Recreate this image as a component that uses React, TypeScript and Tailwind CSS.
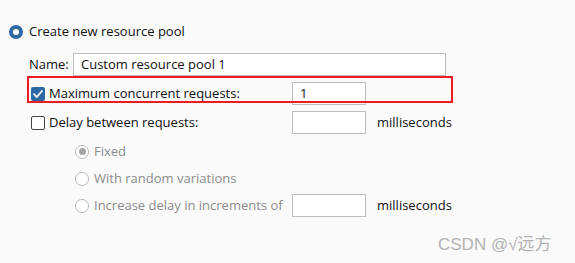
import type { ReactNode } from "react";

const font = { fontFamily: '"Open Sans", "Noto Sans", sans-serif' };

function Checkbox({ checked }: { checked?: boolean }) {
  if (checked) {
    return (
      <span className="flex size-[14px] shrink-0 items-center justify-center rounded-[2px] bg-[#2d6aa5]">
        <svg viewBox="0 0 14 14" className="size-[14px]" aria-hidden>
          <path d="M3 7.2 L5.8 10 L11 4" fill="none" stroke="white" strokeWidth="1.8" strokeLinecap="round" strokeLinejoin="round" />
        </svg>
      </span>
    );
  }
  return <span className="size-[14px] shrink-0 rounded-[2px] border border-[#444444] bg-white" />;
}

function Radio({ selected, disabled }: { selected?: boolean; disabled?: boolean }) {
  if (disabled) {
    return (
      <span className="flex size-[14px] shrink-0 items-center justify-center rounded-full border border-[#b8b8b8] bg-white">
        {selected ? <span className="size-[7px] rounded-full bg-[#a3a3a3]" /> : null}
      </span>
    );
  }
  return (
    <span className="flex size-[14px] shrink-0 items-center justify-center rounded-full bg-[#2d6aa5]">
      <span className="size-[6px] rounded-full bg-white" />
    </span>
  );
}

function Field({ value }: { value?: string }) {
  return (
    <div className="flex h-[23px] w-[74px] shrink-0 items-center border border-[#bdbdbd] bg-white px-[7px]">
      {value}
    </div>
  );
}

function Row({ children, className = "" }: { children: ReactNode; className?: string }) {
  return <div className={`flex h-[23px] items-center ${className}`}>{children}</div>;
}

export default function App() {
  return (
    <div className="relative h-[263px] w-[575px] overflow-hidden bg-[#fafafa] text-[13px] text-[#111111]" style={font}>
      <div className="flex flex-col pt-[20px]">
        <div className="flex h-[24px] items-center gap-[6px] pl-[9px]">
          <Radio selected />
          <span>Create new resource pool</span>
        </div>

        <Row className="mt-[9px] pl-[29px]">
          <span className="w-[44px]">Name:</span>
          <div className="flex h-[23px] w-[373px] items-center border border-[#bdbdbd] bg-white px-[7px]">
            Custom resource pool 1
          </div>
        </Row>

        <Row className="mt-[6px] pl-[31px]">
          <Checkbox checked />
          <span className="ml-[4px] w-[243px]">Maximum concurrent requests:</span>
          <Field value="1" />
        </Row>

        <Row className="mt-[6px] pl-[31px]">
          <Checkbox />
          <span className="ml-[4px] w-[243px]">Delay between requests:</span>
          <Field />
          <span className="ml-[11px]">milliseconds</span>
        </Row>

        <Row className="mt-[6px] pl-[75px] text-[#8c8c8c]">
          <Radio selected disabled />
          <span className="ml-[5px]">Fixed</span>
        </Row>

        <Row className="mt-[4px] pl-[75px] text-[#8c8c8c]">
          <Radio disabled />
          <span className="ml-[5px]">With random variations</span>
        </Row>

        <Row className="mt-[4px] pl-[75px]">
          <Radio disabled />
          <span className="ml-[5px] w-[198px] text-[#8c8c8c]">Increase delay in increments of</span>
          <Field />
          <span className="ml-[11px]">milliseconds</span>
        </Row>
      </div>

      <div className="absolute left-[27px] top-[76px] h-[27px] w-[426px] border-2 border-[#ec1c24]" />

      <div
        className="absolute left-[438px] top-[232px] text-[17px] text-[#b3b3b3]"
        style={{ fontFamily: '"Liberation Sans", "Noto Sans CJK SC", sans-serif' }}
      >
        CSDN @√远方
      </div>
    </div>
  );
}
